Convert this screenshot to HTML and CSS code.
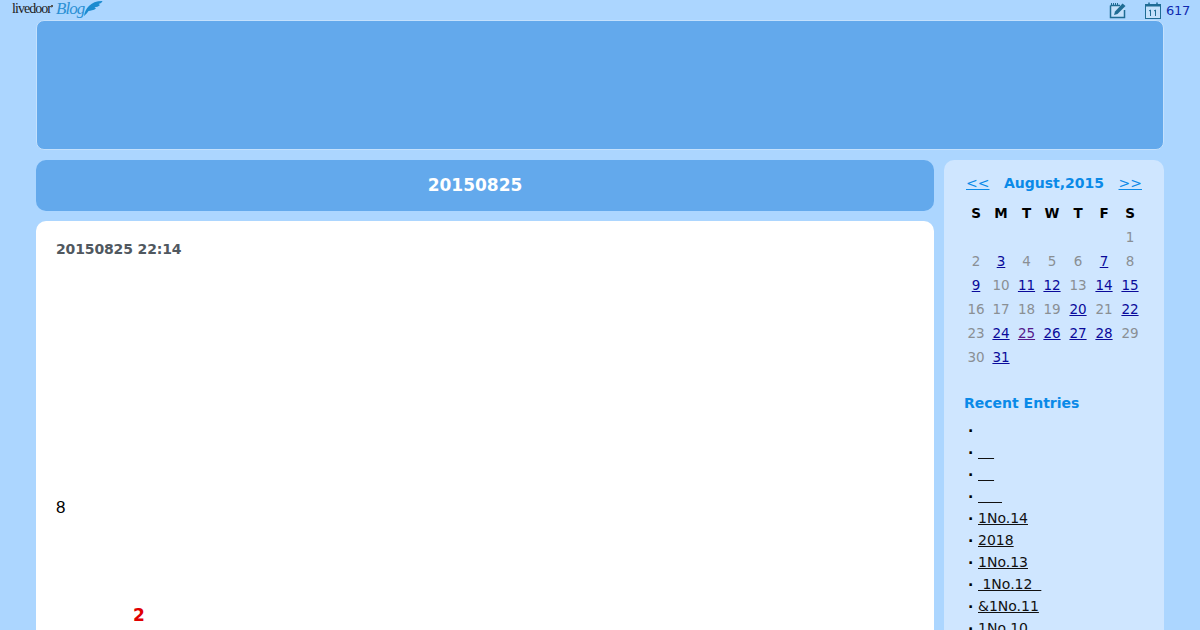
FILE: index.html
```html
<!DOCTYPE html>
<html lang="en">
  <head>
    <meta charset="UTF-8" />
    <title>20150825</title>
    <link rel="stylesheet" href="styles.css">
  </head>
  <body>
    <!-- Top bar -->
    <div class="topbar">
      <a href="#" class="logo">
        <span class="logo-name">livedoor</span><span class="logo-dot"></span><span class="logo-blog">Blog</span>
        <svg class="logo-wing" width="19" height="16" viewBox="0 0 19 16">
          <path d="M0 16 C1 9 6 1 18.500 1 C18 2.500 16.500 3.500 14.500 4 L16 5 C14.500 6.500 12.500 7 10.500 7.500 L12 8.500 C9.500 10.500 6.500 10.500 4.500 11 C3 13 2 14.500 0 16 Z" fill="#1b8bd0"/>
        </svg>
      </a>
      <div class="tools">
        <svg class="tool-icon" width="18" height="17" viewBox="0 0 18 17">
          <path d="M1.500 3.500 H11 L15.500 6 V15.500 H1.500 Z" fill="#c4e1fb"/>
          <path d="M1.500 3.500 H11 M1.500 3.500 V15.500 H15.500 V8" fill="none" stroke="#1f6c94" stroke-width="1.500"/>
          <path d="M2.500 1 V3 M4.500 1 V3 M6.500 1 V3 M8.500 1 V3" stroke="#1f6c94"/>
          <path d="M5 13 L6 9.500 L13.500 1.500 L16.500 4 L8.500 12 Z" fill="#1f6c94"/>
        </svg>
        <svg class="tool-icon tool-cal" width="16" height="17" viewBox="0 0 16 17">
          <rect x="0.500" y="2.500" width="15" height="14" fill="#c4e1fb" stroke="#1f6c94"/>
          <rect x="0" y="2" width="16" height="2.500" fill="#1f6c94"/>
          <path d="M4 0.500 V3 M12 0.500 V3" stroke="#1f6c94" stroke-width="1.500"/>
          <path d="M5.500 8 V14 M10.500 8 V14 M4 9 L5.500 8 M9 9 L10.500 8" stroke="#1f6c94" fill="none"/>
        </svg>
        <a href="#" class="count">617</a>
      </div>
    </div>

    <div id="container">
      <header class="blog-header"></header>

      <div class="columns">
        <main class="main">
          <h2 class="post-title">20150825</h2>
          <article class="entry">
            <div class="entry-date">20150825 22:14</div>
            <p class="entry-num">8</p>
            <p class="entry-red">2</p>
          </article>
        </main>

        <aside class="side">
          <div class="cal-head">
            <a href="#">&lt;&lt;</a>
            <span>August,2015</span>
            <a href="#">&gt;&gt;</a>
          </div>
          <table class="cal">
            <tr><th>S</th><th>M</th><th>T</th><th>W</th><th>T</th><th>F</th><th>S</th></tr>
            <tr><td></td><td></td><td></td><td></td><td></td><td></td><td>1</td></tr>
            <tr><td>2</td><td><a href="#">3</a></td><td>4</td><td>5</td><td>6</td><td><a href="#">7</a></td><td>8</td></tr>
            <tr><td><a href="#">9</a></td><td>10</td><td><a href="#">11</a></td><td><a href="#">12</a></td><td>13</td><td><a href="#">14</a></td><td><a href="#">15</a></td></tr>
            <tr><td>16</td><td>17</td><td>18</td><td>19</td><td><a href="#">20</a></td><td>21</td><td><a href="#">22</a></td></tr>
            <tr><td>23</td><td><a href="#">24</a></td><td><a href="#" class="visited">25</a></td><td><a href="#">26</a></td><td><a href="#">27</a></td><td><a href="#">28</a></td><td>29</td></tr>
            <tr><td>30</td><td><a href="#">31</a></td><td></td><td></td><td></td><td></td><td></td></tr>
          </table>

          <h3 class="side-title">Recent Entries</h3>
          <ul class="recent">
            <li></li>
            <li><a href="#" class="blank">&nbsp;&nbsp;&nbsp;</a></li>
            <li><a href="#" class="blank">&nbsp;&nbsp;&nbsp;</a></li>
            <li><a href="#" class="blank-long">&nbsp;&nbsp;&nbsp;&nbsp;&nbsp;</a></li>
            <li><a href="#">1No.14</a></li>
            <li><a href="#">2018</a></li>
            <li><a href="#">1No.13</a></li>
            <li><a href="#">&nbsp;1No.12&nbsp;&nbsp;</a></li>
            <li><a href="#">&amp;1No.11</a></li>
            <li><a href="#">1No.10</a></li>
          </ul>
        </aside>
      </div>
    </div>
  </body>
</html>
```

FILE: styles.css
```css
* {
  margin: 0;
  box-sizing: border-box;
}

html, body {
  height: 630px;
  overflow: hidden;
}

body {
  font-family: "DejaVu Sans", sans-serif;
  font-size: 14px;
  background: #acd6ff;
  color: #000;
}

/* Top bar */
.topbar {
  height: 20px;
  display: flex;
  justify-content: space-between;
  padding: 0 10px 0 12px;
}

.logo {
  display: flex;
  align-items: flex-start;
  text-decoration: none;
  height: 20px;
}

.logo-name {
  font-family: "Liberation Serif", serif;
  font-size: 14px;
  letter-spacing: -0.95px;
  line-height: 18px;
  color: #1c1c1c;
}

.logo-dot {
  width: 2px;
  height: 2px;
  margin: 5px 3px 0 0;
  background: #555;
}

.logo-blog {
  font-family: "Liberation Serif", serif;
  font-size: 17px;
  font-style: italic;
  letter-spacing: -1px;
  line-height: 17px;
  color: #2b90d4;
}

.tools {
  display: flex;
  align-items: center;
  height: 20px;
}

.tool-cal {
  margin-left: 18px;
}

.count {
  margin-left: 5px;
  font-size: 13px;
  letter-spacing: -0.3px;
  color: #0f2bb0;
  text-decoration: none;
}

/* Layout */
#container {
  margin: 0 36px;
}

.blog-header {
  height: 130px;
  background: #63a9ec;
  border: 1px solid #c4e1fd;
  border-radius: 8px;
}

.columns {
  display: flex;
  gap: 10px;
  margin-top: 10px;
}

.main {
  width: 898px;
}

.post-title {
  height: 51px;
  line-height: 50px;
  background: #63a9ec;
  border-radius: 10px;
  color: #fff;
  font-size: 17px;
  text-align: center;
  margin-bottom: 10px;
  padding-right: 20px;
}

.entry {
  background: #fff;
  border-radius: 10px 10px 0 0;
  padding: 20px;
  height: 500px;
}

.entry-date {
  color: #50585f;
  font-size: 14px;
  font-weight: bold;
  letter-spacing: -0.14px;
  line-height: 16px;
}

.entry-num {
  margin-top: 241px;
  font-family: "Liberation Sans", sans-serif;
  font-size: 17px;
  line-height: 20px;
}

.entry-red {
  margin-top: 87px;
  padding-left: 77px;
  color: #e00000;
  font-size: 17px;
  font-weight: bold;
  line-height: 20px;
}

/* Sidebar */
.side {
  width: 220px;
  background: #cfe6ff;
  border-radius: 10px 10px 0 0;
  padding: 14px 22px 0 20px;
  height: 500px;
}

.cal-head {
  display: flex;
  justify-content: space-between;
  padding: 0 0 0 2px;
  color: #0a8ae8;
  font-size: 14px;
  font-weight: bold;
  line-height: 18px;
}

.cal-head a {
  color: #0a8ae8;
  font-weight: normal;
}

.cal {
  width: 179px;
  margin-top: 9px;
  border-collapse: collapse;
  table-layout: fixed;
}

.cal th, .cal td {
  height: 24px;
  padding: 0;
  text-align: center;
  font-size: 13.500px;
}

.cal th:first-child {
  width: 24px;
}

.cal th:nth-child(3) {
  width: 25px;
}

.cal td {
  color: #8a8f94;
}

.cal a {
  color: #0a0a9a;
  text-underline-offset: 1px;
}

.cal a.visited {
  color: #551a8b;
}

.side-title {
  margin-top: 24px;
  color: #0a8ae8;
  font-size: 14px;
  line-height: 20px;
}

.recent {
  list-style: none;
  padding: 6px 0 0 4px;
}

.recent li {
  height: 22px;
  line-height: 22px;
  position: relative;
  padding-left: 10px;
}

.recent li::before {
  content: "·";
  position: absolute;
  left: 0;
  top: 1px;
  font-weight: bold;
}

.recent a {
  color: #111;
  text-underline-offset: 1px;
}

.recent .blank {
  letter-spacing: 0.9px;
}

.recent .blank-long {
  letter-spacing: 0.35px;
}
```
